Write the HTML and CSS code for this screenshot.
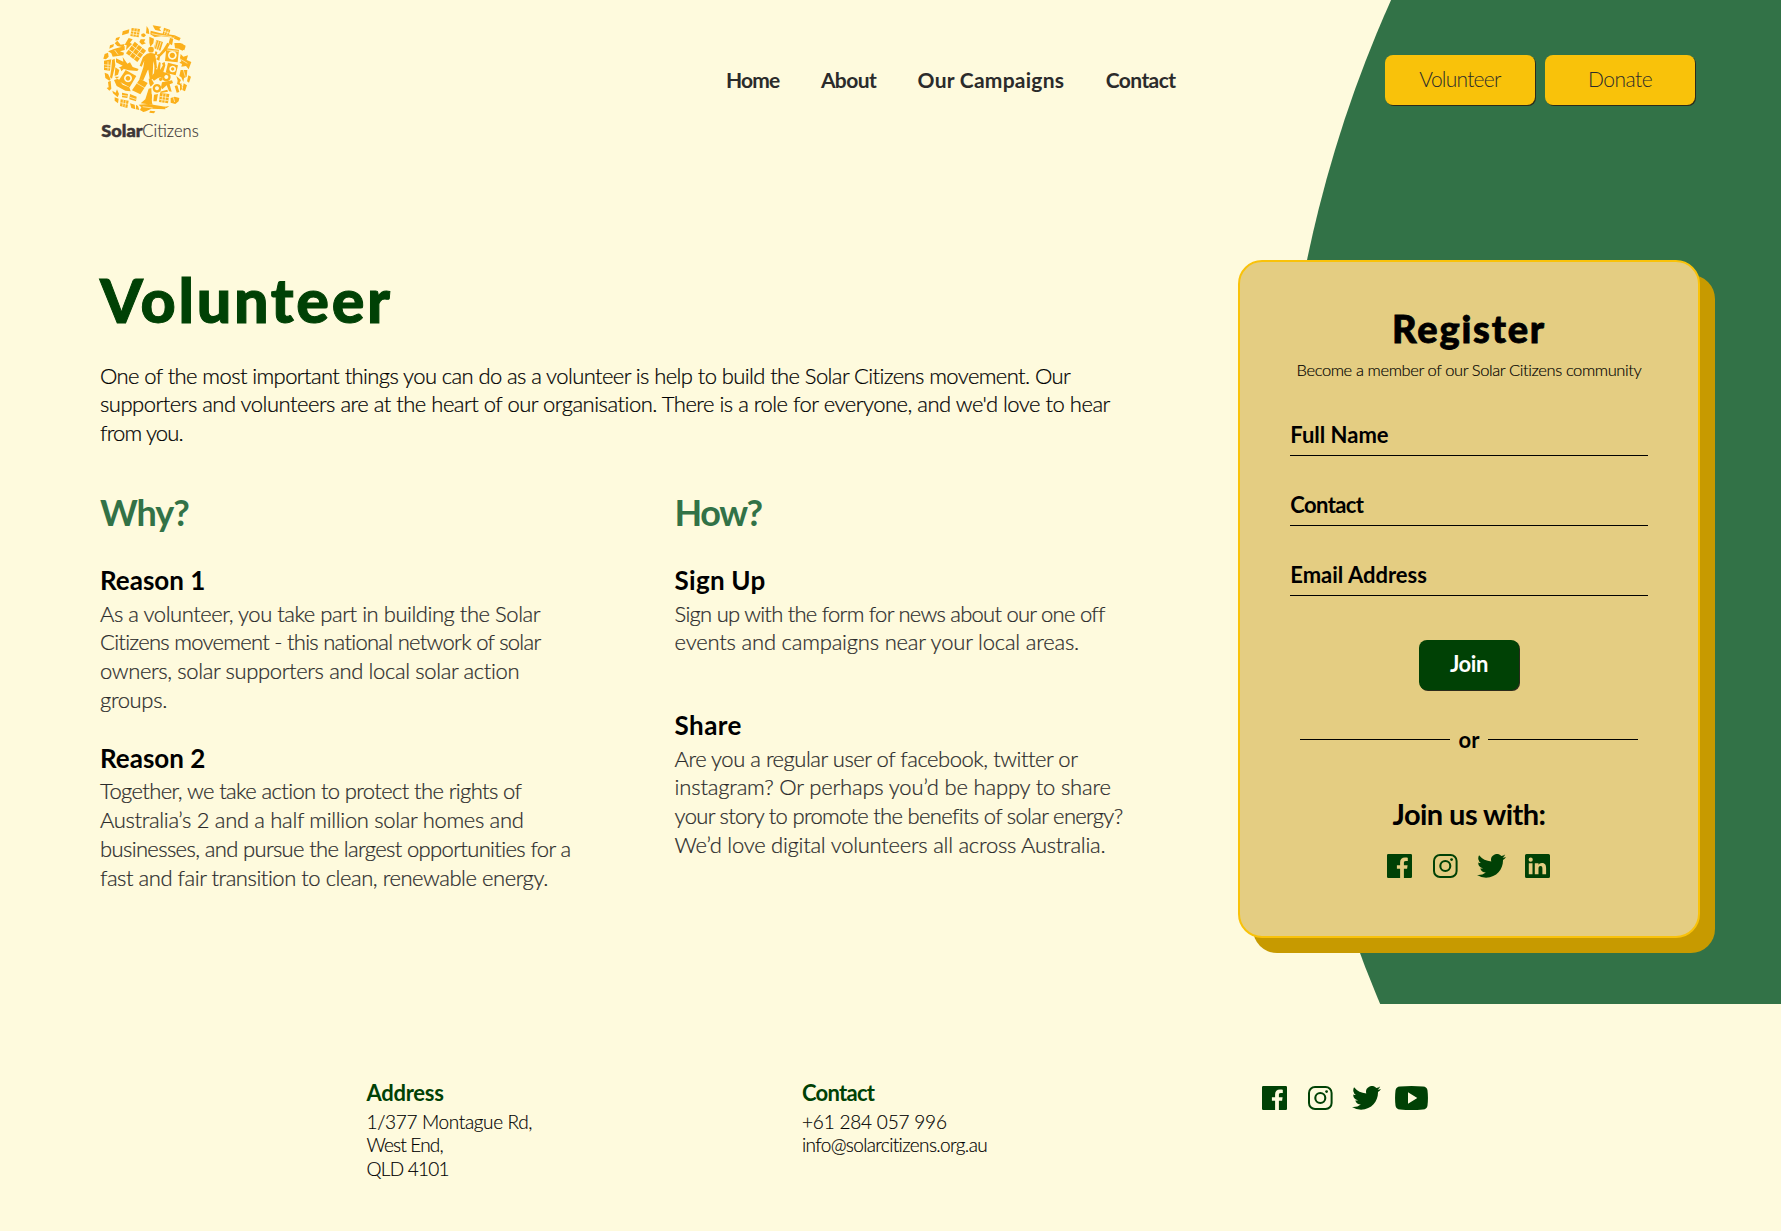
FILE: index.html
```html
<!DOCTYPE html>
<html lang="en">
<head>
<meta charset="utf-8">
<title>Solar Citizens – Volunteer</title>
<link rel="stylesheet" href="styles.css">
</head>
<body>
<svg width="0" height="0" class="sprite" aria-hidden="true">
  <symbol id="facebook" viewBox="0 0 25 24"><path d="M1.2 0h22.6A1.2 1.2 0 0 1 25 1.2v21.6a1.2 1.2 0 0 1-1.2 1.2H16.9v-9.2h3.2l.5-3.6h-3.7V8.9c0-1.1.4-1.8 1.9-1.8h2V3.8c-.4-.1-1.5-.2-2.9-.2-2.9 0-4.8 1.7-4.8 4.9v2.7H9.9v3.6h3.2V24H1.2A1.2 1.2 0 0 1 0 22.8V1.2A1.2 1.2 0 0 1 1.2 0z"/></symbol>
  <symbol id="instagram" viewBox="0 0 25 24"><rect x="1" y="1" width="22.6" height="22" rx="6" fill="none" stroke="currentColor" stroke-width="2"/><circle cx="12.3" cy="12" r="5" fill="none" stroke="currentColor" stroke-width="2.1"/><circle cx="18.6" cy="5.600" r="1.4"/></symbol>
  <symbol id="twitter" viewBox="0 0 24 20" preserveAspectRatio="none"><path d="M24 2.4a9.8 9.8 0 0 1-2.8.8A4.9 4.9 0 0 0 23.3.5a9.9 9.9 0 0 1-3.1 1.2 4.9 4.9 0 0 0-8.4 4.5A14 14 0 0 1 1.7 1.1a4.9 4.9 0 0 0 1.5 6.5 4.9 4.9 0 0 1-2.2-.6v.1a4.9 4.9 0 0 0 3.9 4.8 4.9 4.9 0 0 1-2.2.1 4.9 4.9 0 0 0 4.6 3.4A9.9 9.9 0 0 1 0 17.5 13.9 13.9 0 0 0 7.5 19.7c9.1 0 14.3-7.7 14-14.6A10 10 0 0 0 24 2.4z"/></symbol>
  <symbol id="linkedin" viewBox="0 0 25 24"><path fill-rule="evenodd" d="M1.5 0h22A1.5 1.5 0 0 1 25 1.5v21a1.5 1.5 0 0 1-1.5 1.5h-22A1.5 1.5 0 0 1 0 22.5v-21A1.5 1.5 0 0 1 1.5 0zM3.8 9.2V20.3h3.7V9.2zM5.7 3.6a2.1 2.1 0 1 0 0 4.2 2.1 2.1 0 0 0 0-4.2zM9.8 9.2V20.3h3.7v-5.5c0-1.5.4-2.8 2.1-2.8s1.8 1.5 1.8 2.9v5.4h3.7v-6.1c0-3-.7-5.3-4.2-5.3-1.7 0-2.9.9-3.4 1.8V9.2z"/></symbol>
  <symbol id="youtube" viewBox="0 0 33 24"><path fill-rule="evenodd" d="M5 .5Q16.5-.5 28 .5Q32 .8 32.5 4.5Q33.4 12 32.5 19.5Q32 23.2 28 23.5Q16.5 24.5 5 23.5Q1 23.2.5 19.5Q-.4 12 .5 4.5Q1 .8 5 .5zM13 6.3V17.7L22.3 12z"/></symbol>
</svg>

<div class="backdrop"><div class="backdrop-disc"></div></div>

<header class="header">
  <svg class="logo" viewBox="0 0 420 420" role="img" aria-label="SolarCitizens">
    <!-- mosaic of people, panels and appliances -->
    <g fill="#fbb01b">
      <circle cx="213" cy="119" r="8.5"/>
      <path d="M201 131q12-5 24 1 5 22 6 42l-6 1-5-22-1 22-2 32h-8l-4-28-2 2-13 30-12-3 12-36 3-20-8 18-6-3 10-26z"/>
      <path transform="rotate(38 168 125)" d="M147 104h13v13h-13zM162 104h13v13h-13zM177 104h13v13h-13zM147 119h13v13h-13zM162 119h13v13h-13zM177 119h13v13h-13zM147 134h13v13h-13zM162 134h13v13h-13zM177 134h13v13h-13z"/>
      <path d="M155 54l25 3-4 25-25-4zM240 249l28 3-4 28-27-4zM229 90l20 6-8 26-20-8zM252 53l19 7-6 18-17-7zM122 268l24 4-4 22-22-6z"/>
      <path fill-rule="evenodd" d="M259 115l38 4-4 38-38-4zM277 123a13 13 0 1 0 .1 0zM277 128a8 8 0 1 1-.1 0zM264 158l30 8-7 30-30-8zM278 167a10 10 0 1 0 .1 0zM278 172a5 5 0 1 1-.1 0zM137 180l32 18-20 34-34-19zM144 193a12 12 0 1 0 .1 0zM144 198a7 7 0 1 1-.1 0zM259 188a13 13 0 1 0 .1 0zM259 195a6 6 0 1 1-.1 0zM231 222a13 13 0 1 0 .1 0zM231 229a6 6 0 1 1-.1 0z"/>
      <path d="M180 206l23 13-22 34-25-12zM246 217l30-6 3 8-10 4 6 22-8-1-7-18-13 12-4-6zM240 245l22-6 2 6-22 4z"/>
      <path d="M108 145l22 10-2-14 14 20 8-4 8 14 18 6-4 6-26-2-14-4-16-4 12-6-20-10zM212 202l10-12 2-24 7 14 6-24 5 2-2 22 10-16 6 2-6 20 8 2-10 12-14 4-12 8zM84 124l20-8 30-8v12l-14 4 12 4-2 8-32 4-4-10zM206 236l8-2 2 44 2 6-36-4 14-12z"/>
      <path d="M208 80l14 6-2 14-9 10-3-12zM182 88h14l-4 8 6 4-12 4-8-8zM262 98l8 4-12 20-18 18-2 12-10-4 6-8-4-6 8-2 12-14zM184 72l8-2 6 6-6 6-8-3zM212 62l30 8 42 6-2 7-38-4-20 2-13-8zM218 46l26 4-6 6 6 8-18-4-4-6zM283 99h18l16 8-4 14-12-4-16-2zM284 76l18 8-4 8-16-6zM200 48l6 10 2 14-10-2z"/>
      <path d="M302 132l8 8 14-4-4 14 14 6-8 22-8-10-14 2 2-8-8-4 6-4-4-10zM302 180h20l-2 20-8 4-2 12-6-14-6-4zM289 198l14 12-4 8 10 12-18-8 2-10zM325 196l8 4-6 18-6-4zM300 224l4-6 2 20-6 4zM311 220l10 6-6 18-8-4zM284 228l8-2 6 20-8 2zM272 264l12-4 14 4-2 10-10 8-14-4zM268 288l-8 6-14-2z"/>
      <path d="M176 284l30-2 50 8v8l-42-2-16 8-8 2-10-6 4-8zM210 302l16 2-4 6-14-2zM150 252l20 8-2 14-20-6zM150 280l14 4 2 14-12-4zM168 284l6 4 4 12-10-2zM126 248l18 4-2 12-16-2zM97 242l10 6 4-10 6 14-4 10-14-12zM104 262l12 4-2 14-10-8zM208 250l4 0 4 4 0 12-8-2zM222 254l12-2-4 22-10 0z"/>
      <path d="M72 152l22-4-2 12-2 22-18-2zM96 150l8-4 2 20-6 24-4 16-6-4 4-26zM74 188l10 4 8 16-4 4-12-8zM84 216l8-4 2 24-6 6-8-8 6-2zM102 210l12-4 14 18 20 8 4 12-16-2-26-14z"/>
      <path d="M106 172l12 8-4 14-10 4zM120 172l12 4-8 8zM118 200l-8 6-6-6zM128 64l20-6-2 12-20 6zM146 84l12 4-8 10 6 4-18 18 2-14-6-2zM112 92l10 12 12-2-4 10-18-4-8-8zM90 106l12-4-2 8-12 6zM108 84l12-4-4 10-10 2zM74 132l10-4 2 12-8 8-8-2zM226 124l6 2-2 10-6-2zM270 84l10 2-4 20-10-6zM298 108l8-8 10 12-8 10-10-4zM246 160l8-4 2 10-6 4zM236 206l10-6 2 10-8 4zM206 206l8 0 8 14-10 10-4-8z"/>
    </g>
    <!-- seams between cells and panels -->
    <path fill="none" stroke="#fefadd" stroke-width="2" d="M163 55l-4 24M172 56l-4 24M153 63l26 4M151 71l26 4M249 251l-4 27M258 252l-4 28M239 259l28 4M238 268l27 4M229 92l-6 24M236 94l-7 24M243 96l-8 24M258 59l-5 14M265 61l-5 14M250 63l18 6M130 270l-2 20M138 271l-3 20M121 278l24 5M261 120l34 4M171 220l24 14M215 71l20 4 40 5M188 290l30 4M84 154v26M72 164l20 2M74 172l18 2M302 148l20 12M310 180l6 20M104 120l10 14M280 262l4 14M150 262l18 6M126 256l16 2"/>
    <text class="logo-bold" x="64" y="380" textLength="124" lengthAdjust="spacingAndGlyphs">Solar</text>
    <text class="logo-light" x="187" y="380" textLength="169" lengthAdjust="spacingAndGlyphs">Citizens</text>
  </svg>
  <nav class="nav">
    <a class="k83">Home</a><a class="k60">About</a><a class="w25">Our Campaigns</a><a class="k60">Contact</a>
  </nav>
  <div class="actions">
    <a class="btn k76">Volunteer</a>
    <a class="btn k50">Donate</a>
  </div>
</header>

<main class="main">
  <section class="content">
    <h1>Volunteer</h1>
    <p class="intro">
      <span class="k60">One of the most important things you can do as a volunteer is help to build the Solar Citizens movement. Our</span>
      <span class="k50">supporters and volunteers are at the heart of our organisation. There is a role for everyone, and we'd love to hear</span>
      <span class="k83">from you.</span>
    </p>
    <div class="columns">
      <div>
        <h2 class="k100">Why?</h2>
        <article>
          <h3>Reason 1</h3>
          <p>
            <span class="k46">As a volunteer, you take part in building the Solar</span>
            <span class="k72">Citizens movement - this national network of solar</span>
            <span class="k37">owners, solar supporters and local solar action</span>
            <span class="k35">groups.</span>
          </p>
        </article>
        <article>
          <h3>Reason 2</h3>
          <p>
            <span class="k62">Together, we take action to protect the rights of</span>
            <span class="k33">Australia’s 2 and a half million solar homes and</span>
            <span class="k64">businesses, and pursue the largest opportunities for a</span>
            <span class="k46">fast and fair transition to clean, renewable energy.</span>
          </p>
        </article>
      </div>
      <div>
        <h2 class="k150">How?</h2>
        <article class="signup">
          <h3 class="w25">Sign Up</h3>
          <p>
            <span class="k75">Sign up with the form for news about our one off</span>
            <span class="k20">events and campaigns near your local areas.</span>
          </p>
        </article>
        <article>
          <h3 class="w40">Share</h3>
          <p>
            <span class="k48">Are you a regular user of facebook, twitter or</span>
            <span class="k19">instagram? Or perhaps you’d be happy to share</span>
            <span class="k69">your story to promote the benefits of solar energy?</span>
            <span class="k26">We’d love digital volunteers all across Australia.</span>
          </p>
        </article>
      </div>
    </div>
  </section>

  <form class="card">
    <h2 class="card-title">Register</h2>
    <p class="card-sub">Become a member of our Solar Citizens community</p>
    <div class="fields">
      <label>Full Name</label>
      <label class="k60">Contact</label>
      <label>Email Address</label>
    </div>
    <button type="button" class="join k37">Join</button>
    <div class="divider"><span>or</span></div>
    <h3 class="social-title">Join us with:</h3>
    <div class="social">
      <svg class="icon"><use href="#facebook"/></svg>
      <svg class="icon"><use href="#instagram"/></svg>
      <svg class="icon bird"><use href="#twitter"/></svg>
      <svg class="icon"><use href="#linkedin"/></svg>
    </div>
  </form>
</main>

<footer class="footer">
  <div>
    <h4 class="k26">Address</h4>
    <p>
      <span class="k35">1/377 Montague Rd,</span>
      <span class="k83">West End,</span>
      <span class="k76">QLD 4101</span>
    </p>
  </div>
  <div>
    <h4 class="k72">Contact</h4>
    <p>
      <span class="k20">+61 284 057 996</span>
      <span class="k64">info@solarcitizens.org.au</span>
    </p>
  </div>
  <div class="social social-footer">
    <svg class="icon"><use href="#facebook"/></svg>
    <svg class="icon"><use href="#instagram"/></svg>
    <svg class="icon bird"><use href="#twitter"/></svg>
    <svg class="icon wide"><use href="#youtube"/></svg>
  </div>
</footer>
</body>
</html>
```
FILE: styles.css
```css
* { box-sizing: border-box; }

body {
  margin: 0;
  height: 1231px;
  overflow: hidden;
  position: relative;
  background: #fefadd;
  color: #000;
  font-family: Lato, "Open Sans", sans-serif;
  font-weight: 300;
}

h1, h2, h3, h4, p { margin: 0; }
.sprite { position: absolute; }

/* green disc running behind the header and the card */
.backdrop {
  position: absolute;
  inset: 0 0 auto 0;
  height: 1003.5px;
  overflow: hidden;
  z-index: -1;
}
.backdrop-disc {
  position: absolute;
  left: 1280.5px;
  top: -743.4px;
  width: 2515.6px;
  height: 2515.6px;
  border-radius: 50%;
  background: #327247;
}

/* header */
.header {
  display: flex;
  align-items: center;
  height: 260px;
  padding: 10px 86px 110px 80px;
}
.logo { width: 140px; height: 140px; flex: none; }
.logo text { fill: #3c3535; font-size: 52px; }
.logo-bold { font-weight: 900; stroke: #3c3535; stroke-width: 1.5px; }
.logo-light { font-weight: 300; stroke: #3c3535; stroke-width: 0.5px; }
.nav {
  display: flex;
  gap: 41.5px;
  margin-left: 506px;
  font-size: 21px;
  line-height: 26px;
  font-weight: 700;
  color: #2b2b2b;
}
.actions { display: flex; gap: 10px; margin-left: auto; }
.btn {
  width: 150px;
  height: 50px;
  border-radius: 8px;
  background: #f9c20a;
  box-shadow: 1px 1px 0 #2b2b1b;
  color: #2b2b2b;
  font-size: 21px;
  line-height: 48px;
  text-align: center;
}

/* page body */
.main {
  display: grid;
  grid-template-columns: 1138px 462px;
  align-items: start;
  height: 743.5px;
  padding-left: 100px;
}
h1 {
  margin: 4px 0 25.6px 0;
  color: #004105;
  font-size: 61px;
  line-height: 72px;
  font-weight: 900;
  letter-spacing: 2.7px;
  -webkit-text-stroke: 1px #004105;
}
p > span { display: block; white-space: nowrap; }
.content p {
  font-size: 22px;
  line-height: 28.8px;
  -webkit-text-stroke-width: 0.2px;
}
.columns {
  display: grid;
  grid-template-columns: 574.6px 1fr;
  margin-top: 42.8px;
}
.columns h2 {
  margin-bottom: 31.1px;
  color: #327247;
  font-size: 36px;
  line-height: 43.2px;
  font-weight: 700;
}
.columns h3 {
  margin-bottom: 3.3px;
  font-size: 26px;
  line-height: 31.2px;
  font-weight: 700;
}
.columns p { color: #2b2b2b; }
.columns article { margin-bottom: 28px; }
.columns .signup { margin-bottom: 52.9px; }

/* register card */
.card {
  display: flex;
  flex-direction: column;
  align-items: center;
  height: 678px;
  padding: 42.6px 50px 0;
  border: 2px solid #f9c20a;
  border-radius: 24px;
  background: #e4cd82;
  box-shadow: 15px 15px 0 #c79a00;
}
.card-title {
  font-size: 38px;
  line-height: 46px;
  font-weight: 900;
  letter-spacing: 1.8px;
  -webkit-text-stroke: 0.8px #000;
}
.card-sub {
  margin-top: 9px;
  font-size: 16.5px;
  line-height: 20px;
  letter-spacing: -0.4px;
  white-space: nowrap;
  -webkit-text-stroke-width: 0.15px;
}
.fields {
  display: grid;
  gap: 36.5px;
  width: 357.5px;
  margin-top: 42.5px;
}
.fields label {
  padding-bottom: 6px;
  border-bottom: 1px solid #000;
  font-size: 22px;
  line-height: 26.5px;
  font-weight: 700;
}
.join {
  width: 100px;
  height: 50px;
  margin-top: 44.4px;
  padding: 0 0 1px;
  border: 0;
  border-radius: 8px;
  background: #004105;
  box-shadow: 1px 1px 0 #2b2b1b;
  color: #fff;
  font: 700 22px/26px Lato, sans-serif;
}
.divider {
  display: flex;
  align-items: center;
  gap: 9px;
  width: 338px;
  margin-top: 36.200px;
  font-size: 22px;
  line-height: 26px;
  font-weight: 700;
}
.divider::before, .divider::after {
  content: "";
  flex: 1;
  height: 1px;
  background: #000;
}
.divider span { padding-top: 1px; margin-bottom: -1px; }
.social-title {
  margin-top: 43.6px;
  font-size: 29px;
  line-height: 36px;
  font-weight: 700;
  letter-spacing: -0.55px;
}
.social { display: flex; gap: 21px; color: #004105; }
.card .social { margin: 22.2px 1px 0 0; }
.icon { width: 25px; height: 24px; fill: currentColor; }
.icon.bird { width: 29px; margin-inline: -2.5px -2px; }
.icon.wide { width: 33px; margin-left: -4.5px; }

/* footer */
.footer {
  display: grid;
  grid-template-columns: 435.5px 460px auto;
  padding: 76.5px 0 0 366.5px;
}
.footer h4 {
  margin-bottom: 3px;
  color: #004105;
  font-size: 22px;
  line-height: 26.500px;
  font-weight: 700;
}
.footer p {
  font-size: 19px;
  line-height: 23.6px;
  -webkit-text-stroke-width: 0.15px;
}
.social-footer { padding-top: 6px; }

/* tracking steps */
.w40 { letter-spacing: 0.4px; }
.w25 { letter-spacing: 0.25px; }
.k19 { letter-spacing: -0.18px; }
.k20 { letter-spacing: -0.2px; }
.k26 { letter-spacing: -0.26px; }
.k33 { letter-spacing: -0.33px; }
.k35 { letter-spacing: -0.35px; }
.k37 { letter-spacing: -0.37px; }
.k46 { letter-spacing: -0.46px; }
.k48 { letter-spacing: -0.48px; }
.k50 { letter-spacing: -0.5px; }
.k60 { letter-spacing: -0.6px; }
.k62 { letter-spacing: -0.62px; }
.k64 { letter-spacing: -0.64px; }
.k69 { letter-spacing: -0.69px; }
.k72 { letter-spacing: -0.72px; }
.k75 { letter-spacing: -0.75px; }
.k76 { letter-spacing: -0.76px; }
.k83 { letter-spacing: -0.83px; }
.k100 { letter-spacing: -1px; }
.k150 { letter-spacing: -1.5px; }
```
